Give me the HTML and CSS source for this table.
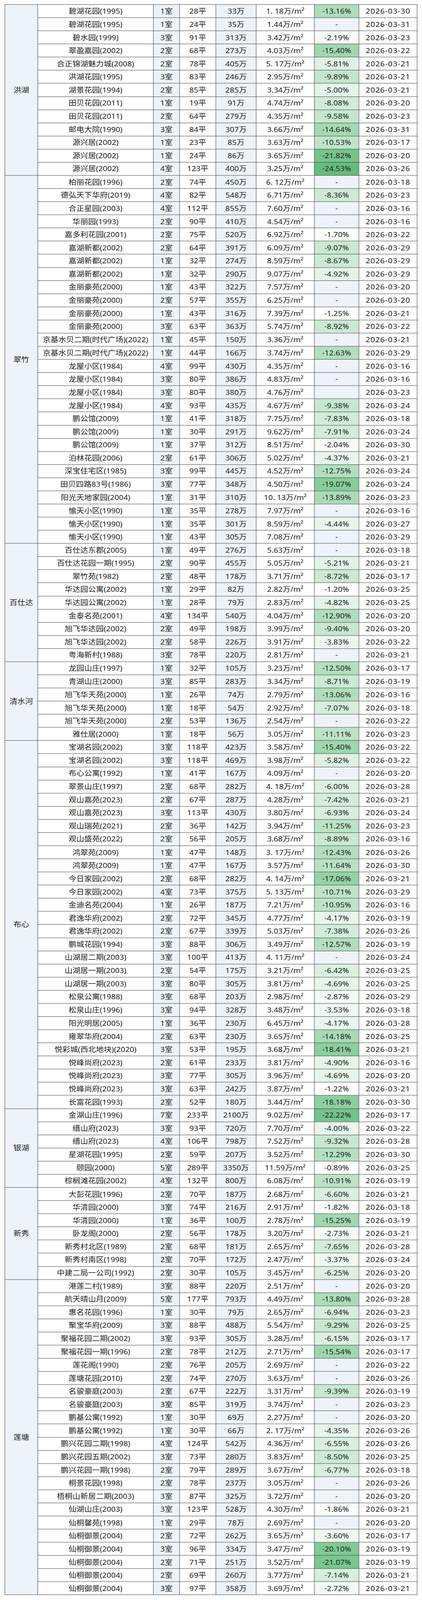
FILE: index.html
```html
<!DOCTYPE html>
<html lang="zh-CN">
<head>
<meta charset="utf-8">
<title>二手房价格表</title>
<link rel="stylesheet" href="styles.css">
</head>
<body>
<div class="viewport">
  <div class="frame" id="frame">
    <table class="sheet">
      <colgroup>
        <col class="k-d"><col class="k-n"><col class="k-r"><col class="k-a">
        <col class="k-p"><col class="k-u"><col class="k-c"><col class="k-t">
      </colgroup>
      <tbody id="tb"></tbody>
    </table>
  </div>
</div>
<script src="script.js"></script>
</body>
</html>
```

FILE: styles.css
```css
html, body {
  margin: 0;
  padding: 0;
  background: #ffffff;
}

body {
  font-family: "Noto Sans", "Noto Sans CJK SC", sans-serif;
  color: #222222;
}

.viewport {
  height: 100vh;
  overflow: hidden;
}

.frame {
  padding-top: 12px;
  transform-origin: 50% 0;
}

.sheet {
  width: 1055px;
  margin: 0 auto;
  border-collapse: collapse;
  table-layout: fixed;
  font-size: 20px;
}

.k-d { width: 84px; }
.k-n { width: 296px; }
.k-r { width: 67px; }
.k-a { width: 93px; }
.k-p { width: 103px; }
.k-u { width: 149px; }
.k-c { width: 114px; }
.k-t { width: 149px; }

.sheet tr {
  height: 36.09px;
}

.sheet td {
  border: 1px solid #353535;
  padding: 0;
  text-align: center;
  vertical-align: middle;
  white-space: nowrap;
  line-height: 22px;
  background: #ffffff;
}

.sheet td.band {
  background: #eef3fa;
}

.sheet td.date {
  letter-spacing: 1px;
}

.gap {
  display: inline-block;
  width: 5px;
}
```

FILE: script.js
```js
(function () {
  var data = [
    ["洪湖", [
      "碧湖花园(1995)|1|28|33|1.18|-13.16|30",
      "碧湖花园(1995)|1|24|35|1.44|-|31",
      "碧水园(1999)|3|91|313|3.42|-2.19|23",
      "翠盈嘉园(2002)|2|68|273|4.03|-15.40|22",
      "合正锦湖魅力城(2008)|2|78|405|5.17|-5.81|21",
      "洪湖花园(1995)|3|83|246|2.95|-9.89|21",
      "湖景花园(1994)|2|85|285|3.34|-5.00|21",
      "田贝花园(2011)|1|19|91|4.74|-8.08|20",
      "田贝花园(2011)|2|64|279|4.35|-9.58|23",
      "邮电大院(1990)|3|84|307|3.66|-14.64|31",
      "源兴居(2002)|1|23|85|3.63|-10.53|17",
      "源兴居(2002)|1|24|86|3.65|-21.82|20",
      "源兴居(2002)|4|123|400|3.25|-24.53|26"
    ]],
    ["翠竹", [
      "柏丽花园(1996)|2|74|450|6.12|-|18",
      "德弘天下华府(2019)|4|82|548|6.71|-8.36|23",
      "合正星园(2003)|4|112|855|7.60|-|16",
      "华丽园(1993)|2|90|410|4.54|-|16",
      "嘉多利花园(2001)|2|75|520|6.92|-1.70|22",
      "嘉湖新都(2002)|2|64|391|6.09|-9.07|29",
      "嘉湖新都(2002)|1|32|274|8.59|-8.67|29",
      "嘉湖新都(2002)|1|32|290|9.07|-4.92|29",
      "金丽豪苑(2000)|1|43|322|7.57|-|20",
      "金丽豪苑(2000)|2|57|355|6.25|-|20",
      "金丽豪苑(2000)|1|43|316|7.39|-1.25|21",
      "金丽豪苑(2000)|3|63|363|5.74|-8.92|22",
      "京基水贝二期(时代广场)(2022)|1|45|150|3.36|-|21",
      "京基水贝二期(时代广场)(2022)|1|44|166|3.74|-12.63|29",
      "龙屋小区(1984)|4|99|430|4.35|-|16",
      "龙屋小区(1984)|3|80|386|4.83|-|16",
      "龙屋小区(1984)|3|80|380|4.76||23",
      "龙屋小区(1984)|4|93|435|4.67|-9.38|24",
      "鹏公馆(2009)|1|41|318|7.75|-7.83|18",
      "鹏公馆(2009)|1|30|291|9.62|-7.91|24",
      "鹏公馆(2009)|1|37|312|8.51|-2.04|30",
      "泊林花园(2006)|2|61|306|5.02|-4.37|21",
      "深宝住宅区(1985)|3|99|445|4.52|-12.75|24",
      "田贝四路83号(1986)|3|77|348|4.50|-19.07|24",
      "阳光天地家园(2004)|1|31|310|10.13|-13.89|23",
      "愉天小区(1990)|1|35|278|7.97|-|16",
      "愉天小区(1990)|1|35|301|8.59|-4.44|27",
      "愉天小区(1990)|1|43|305|7.08|-|29"
    ]],
    ["百仕达", [
      "百仕达东郡(2005)|1|49|276|5.63|-|18",
      "百仕达花园一期(1995)|2|90|455|5.05|-5.21|21",
      "翠竹苑(1982)|2|48|178|3.71|-8.72|17",
      "华达园公寓(2002)|1|29|82|2.82|-1.20|25",
      "华达园公寓(2002)|1|28|79|2.83|-4.82|25",
      "金泰名苑(2001)|4|134|540|4.04|-12.90|20",
      "旭飞华达园(2002)|2|49|198|3.99|-9.40|20",
      "旭飞华达园(2002)|2|58|226|3.91|-3.83|22",
      "粤海新村(1988)|3|78|220|2.81|-|21"
    ]],
    ["清水河", [
      "龙园山庄(1997)|1|32|105|3.23|-12.50|17",
      "青湖山庄(2000)|3|85|283|3.34|-8.71|19",
      "旭飞华天苑(2000)|1|26|74|2.79|-13.06|16",
      "旭飞华天苑(2000)|1|18|54|2.92|-7.07|18",
      "旭飞华天苑(2000)|2|53|136|2.54|-|22",
      "雅仕居(2000)|1|18|56|3.05|-11.11|23"
    ]],
    ["布心", [
      "宝湖名园(2002)|3|118|423|3.58|-15.40|22",
      "宝湖名园(2002)|3|118|469|3.98|-5.82|22",
      "布心公寓(1992)|1|41|167|4.09|-|20",
      "翠景山庄(1997)|2|68|282|4.18|-6.00|28",
      "观山嘉苑(2023)|2|67|287|4.28|-7.42|21",
      "观山嘉苑(2023)|3|113|430|3.80|-6.93|24",
      "观山瑞苑(2021)|2|36|142|3.94|-11.25|23",
      "观山盛苑(2022)|2|56|205|3.68|-8.89|16",
      "鸿翠苑(2009)|1|47|148|3.17|-12.43|26",
      "鸿翠苑(2009)|1|47|167|3.57|-11.64|30",
      "今日家园(2002)|2|68|282|4.14|-17.06|21",
      "今日家园(2002)|4|73|375|5.13|-10.71|29",
      "金迪名苑(2004)|1|26|187|7.21|-10.95|16",
      "君逸华府(2002)|2|72|345|4.77|-4.17|19",
      "君逸华府(2002)|2|67|339|5.03|-7.38|26",
      "鹏城花园(1994)|3|88|306|3.49|-12.57|19",
      "山湖居二期(2003)|3|100|413|4.11|-|24",
      "山湖居一期(2003)|2|54|175|3.21|-6.42|25",
      "山湖居一期(2003)|3|80|305|3.81|-4.69|25",
      "松泉公寓(1988)|3|68|203|2.98|-2.87|29",
      "松泉山庄(1996)|3|94|328|3.48|-3.53|18",
      "阳光明居(2005)|1|36|230|6.45|-4.17|28",
      "雍翠华府(2004)|2|63|230|3.65|-14.18|25",
      "悦彩城(西北地块)(2020)|3|53|195|3.68|-18.41|21",
      "悦峰尚府(2023)|2|61|233|3.81|-4.90|16",
      "悦峰尚府(2023)|3|77|305|3.96|-4.69|20",
      "悦峰尚府(2023)|3|63|242|3.87|-1.22|21",
      "长富花园(1993)|2|52|180|3.44|-18.18|30"
    ]],
    ["银湖", [
      "金湖山庄(1996)|7|233|2100|9.02|-22.22|17",
      "缙山府(2023)|3|93|720|7.70|-4.00|22",
      "缙山府(2023)|4|106|798|7.52|-9.32|28",
      "星湖花园(1995)|2|59|207|3.52|-12.29|30",
      "颐园(2000)|5|289|3350|11.59|-0.89|25",
      "棕榈滩花园(2002)|4|132|800|6.08|-10.91|19"
    ]],
    ["新秀", [
      "大彭花园(1996)|2|70|187|2.68|-6.60|21",
      "华清园(2000)|3|74|216|2.91|-1.82|18",
      "华清园(2000)|1|36|100|2.78|-15.25|19",
      "卧龙阁(2000)|2|56|178|3.20|-2.73|21",
      "新秀村北区(1989)|2|68|181|2.65|-7.65|28",
      "新秀村南区(1998)|2|70|172|2.47|-3.37|24",
      "中建二局一公司(1992)|2|30|105|3.45|-6.25|20"
    ]],
    ["莲塘", [
      "港莲二村(1989)|3|88|220|2.51|-|20",
      "航天晴山月(2009)|5|177|793|4.49|-13.80|28",
      "惠名花园(1996)|1|30|79|2.65|-6.94|23",
      "聚宝华府(2009)|3|88|488|5.54|-9.29|25",
      "聚福花园二期(2002)|3|93|305|3.28|-6.15|17",
      "聚福花园一期(1996)|2|78|212|2.71|-15.54|17",
      "莲花阁(1990)|2|76|205|2.69|-|22",
      "莲塘花园(2010)|2|74|270|3.63|-|26",
      "名骏豪庭(2003)|2|67|222|3.31|-9.39|19",
      "名骏豪庭(2003)|3|85|319|3.74|-|23",
      "鹏基公寓(1992)|1|30|69|2.27|-|20",
      "鹏基公寓(1992)|1|30|66|2.17|-4.35|26",
      "鹏兴花园二期(1998)|4|124|542|4.36|-6.55|26",
      "鹏兴花园五期(2002)|3|73|280|3.83|-8.50|25",
      "鹏兴花园一期(1998)|2|79|289|3.67|-6.77|18",
      "桐景花园(1998)|2|78|237|3.05|-|26",
      "梧桐山新居二期(2003)|3|87|325|3.72|-|20",
      "仙湖山庄(2003)|3|123|528|4.30|-1.86|21",
      "仙桐馨苑(1998)|1|29|78|2.69|-|20",
      "仙桐御景(2004)|2|72|262|3.65|-3.60|17",
      "仙桐御景(2004)|3|96|334|3.47|-20.10|19",
      "仙桐御景(2004)|2|71|251|3.52|-21.07|19",
      "仙桐御景(2004)|2|69|260|3.77|-7.14|21",
      "仙桐御景(2004)|3|97|358|3.69|-2.72|21"
    ]]
  ];

  var MIN = -24.53, MAX = -0.89;
  function green(v) {
    var t = (v - MAX) / (MIN - MAX);
    if (t < 0) t = 0;
    if (t > 1) t = 1;
    var r = Math.round(255 + (99 - 255) * t);
    var g = Math.round(255 + (190 - 255) * t);
    var b = Math.round(255 + (123 - 255) * t);
    return "rgb(" + r + "," + g + "," + b + ")";
  }

  function cell(tr, cls, html) {
    var td = document.createElement("td");
    if (cls) td.className = cls;
    td.innerHTML = html;
    tr.appendChild(td);
    return td;
  }

  var tb = document.getElementById("tb");
  data.forEach(function (group) {
    var name = group[0], rows = group[1];
    rows.forEach(function (line, i) {
      var f = line.split("|");
      var tr = document.createElement("tr");
      if (i === 0) {
        var d = cell(tr, "band", name);
        d.rowSpan = rows.length;
      }
      cell(tr, "", f[0]);
      cell(tr, "band", f[1] + "室");
      cell(tr, "", f[2] + "平");
      cell(tr, "band", f[3] + "万");
      var unit = f[4].replace(".1", '.<span class="gap"></span>1');
      cell(tr, "", unit + "万/m²");
      var ch = f[5];
      if (ch === "-" || ch === "") {
        cell(tr, "band", ch);
      } else {
        var c = cell(tr, "", ch + "%");
        c.style.background = green(parseFloat(ch));
      }
      cell(tr, "date", "2026-03-" + f[6]);
      tb.appendChild(tr);
    });
  });

  /* The page is designed for a 4392px-tall frame; if the window is
     shorter, squeeze it vertically so the whole sheet stays in view. */
  var DESIGN_H = 4392;
  var frame = document.getElementById("frame");
  var s = window.innerHeight / DESIGN_H;
  if (s < 0.999) {
    frame.style.transform = "scaleY(" + s.toFixed(5) + ")";
  }
})();
```
